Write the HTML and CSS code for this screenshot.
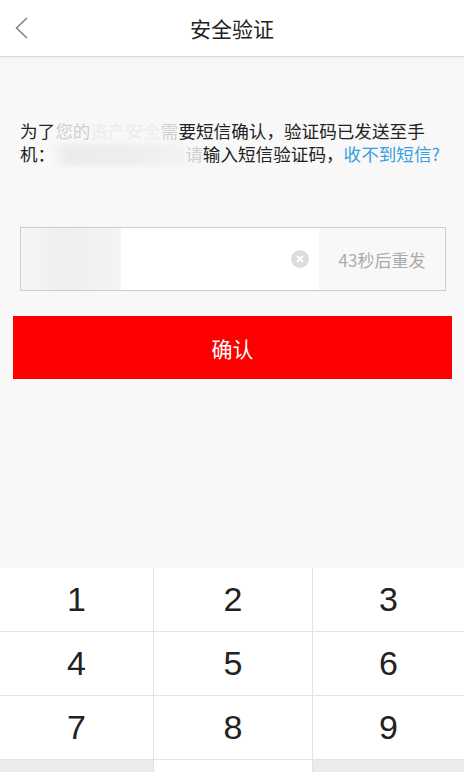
FILE: index.html
```html
<!DOCTYPE html>
<html lang="zh-CN">
<head>
  <meta charset="UTF-8">
  <title>安全验证</title>
  <meta name="viewport" content="width=device-width, initial-scale=1.0" />
  <link rel="stylesheet" href="styles.css">
</head>
<body>
  <div class="page">
    <header class="topbar">
      <a class="back" href="#">
        <svg width="14" height="24" viewBox="0 0 14 24"><polyline points="12,2 1.5,12 12,22" fill="none" stroke="#7a7a7a" stroke-width="1.4"/></svg>
      </a>
      <h1>安全验证</h1>
    </header>

    <main class="content">
      <!-- el número de teléfono aparece tapado en la captura -->
      <p class="tip">为了<span class="fade">您的</span><span class="hide">资产安全</span><span class="fade">需</span>要短信确认，验证码已发送至手机：<span class="masked"></span><span class="fade">请</span>输入短信验证码，<a class="link" href="#">收不到短信?</a></p>

      <div class="code-box">
        <div class="code-blur"></div>
        <div class="code-field"></div>
        <span class="clear">
          <svg width="18" height="18" viewBox="0 0 18 18"><circle cx="9" cy="9" r="9" fill="#dcdcdc"/><path d="M6 6 L12 12 M12 6 L6 12" stroke="#fff" stroke-width="1.8"/></svg>
        </span>
        <div class="resend">43秒后重发</div>
      </div>

      <button class="confirm">确认</button>
    </main>

    <div class="keypad">
      <div class="key">1</div>
      <div class="key">2</div>
      <div class="key">3</div>
      <div class="key">4</div>
      <div class="key">5</div>
      <div class="key">6</div>
      <div class="key">7</div>
      <div class="key">8</div>
      <div class="key">9</div>
      <div class="key key-gray"></div>
      <div class="key"></div>
      <div class="key key-gray"></div>
    </div>
  </div>
</body>
</html>
```

FILE: styles.css
```css
body {
  margin: 0;
  font-family: "Noto Sans CJK SC", "Noto Sans", sans-serif;
  background-color: #f8f8f8;
  color: #222;
}

.page {
  width: 464px;
  height: 772px;
  overflow: hidden;
  display: flex;
  flex-direction: column;
}

.topbar {
  position: relative;
  height: 56px;
  flex-shrink: 0;
  background: white;
  border-bottom: 1px solid #dcdcdc;
  box-shadow: 0 1px 3px rgba(0, 0, 0, 0.05);
  display: flex;
  align-items: center;
  justify-content: center;
}

.topbar h1 {
  margin: 0;
  font-size: 21px;
  font-weight: normal;
  color: #222;
}

.back {
  position: absolute;
  left: 15px;
  top: 16px;
  line-height: 0;
}

.content {
  height: 511px;
  flex-shrink: 0;
  padding-top: 62px;
  box-sizing: border-box;
}

.tip {
  margin: 0 23px 0 20px;
  font-size: 17.6px;
  line-height: 23px;
  color: #222;
}

.fade {
  color: #cfcfcf;
}

.hide {
  color: #ececec;
}

.masked {
  display: inline-block;
  width: 130px;
  height: 22px;
  vertical-align: -5px;
  background: linear-gradient(90deg, #f4f4f4 0%, #ececec 10%, #eeeeee 60%, #f3f3f3 100%);
  filter: blur(2px);
}

.link {
  color: #3a9ee0;
  text-decoration: none;
  white-space: nowrap;
}

.code-box {
  margin: 61px 18px 0 20px;
  height: 64px;
  box-sizing: border-box;
  border: 1px solid #cccccc;
  background: white;
  display: flex;
  align-items: stretch;
}

.code-blur {
  width: 100px;
  background: linear-gradient(90deg, #f6f6f6 0%, #efefef 40%, #f4f4f4 100%);
}

.code-field {
  flex: 1;
}

.clear {
  display: flex;
  align-items: center;
  padding: 0 10px 0 0;
}

.resend {
  width: 126px;
  background: #f8f8f8;
  color: #ababab;
  font-size: 17px;
  display: flex;
  align-items: center;
  justify-content: center;
}

.confirm {
  display: block;
  margin: 25px 0 0 13px;
  width: 439px;
  height: 63px;
  border: none;
  background-color: #fe0000;
  color: white;
  font-family: inherit;
  font-size: 21px;
  cursor: pointer;
}

.keypad {
  flex-shrink: 0;
  display: grid;
  grid-template-columns: 153px 158px 1fr;
  grid-auto-rows: 63px;
  gap: 1px;
  background: #e2e2e2;
}

.key {
  background: white;
  display: flex;
  align-items: center;
  justify-content: center;
  font-family: "Liberation Sans", sans-serif;
  font-size: 34px;
  color: #222;
}

.key-gray {
  background: #ececec;
}
```
